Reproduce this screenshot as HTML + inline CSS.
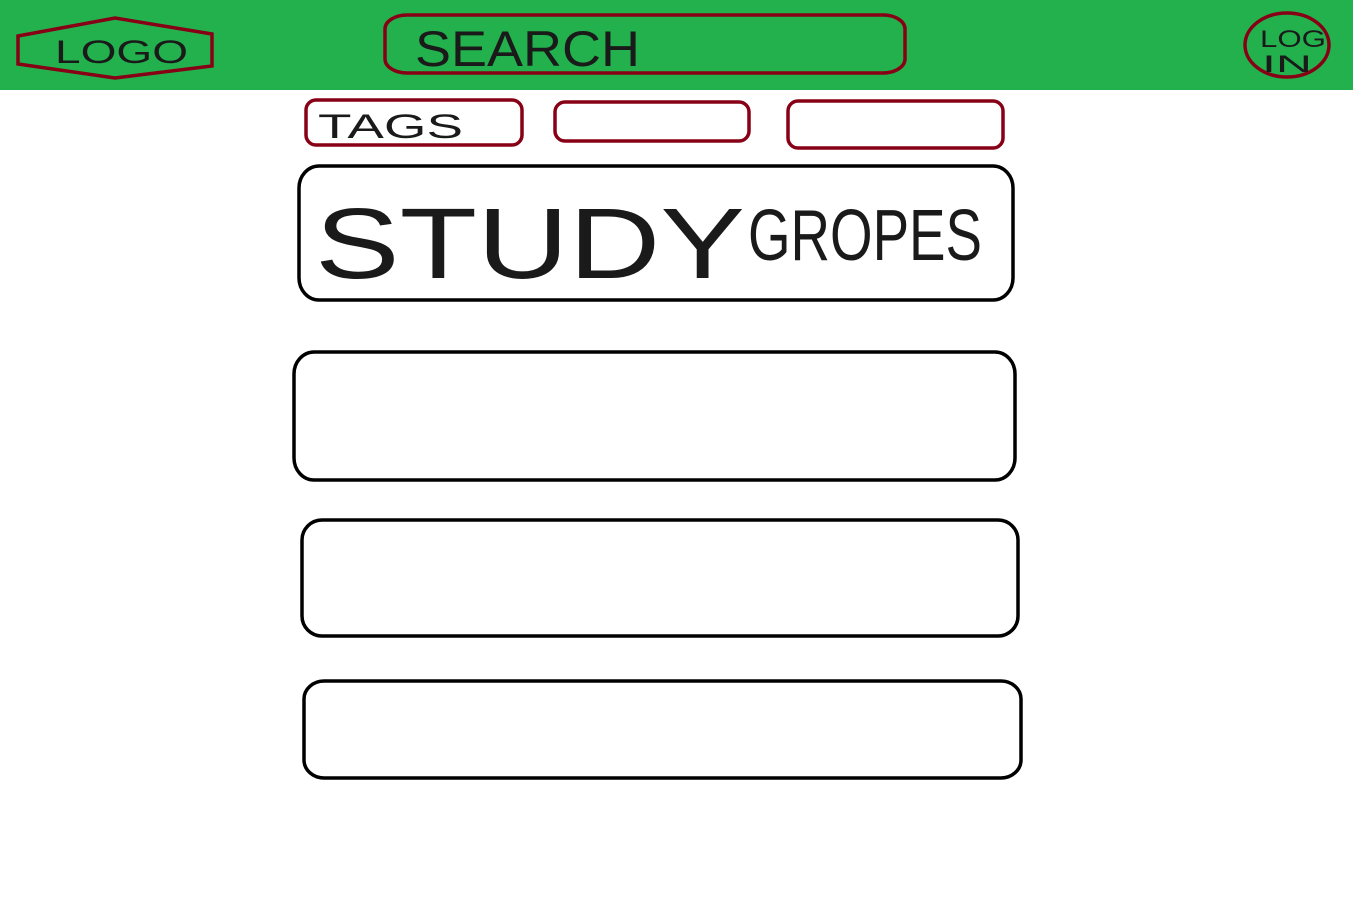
<!DOCTYPE html>
<html><head><meta charset="utf-8"><style>
html,body{margin:0;padding:0;background:#fff;width:1353px;height:902px;overflow:hidden}
svg text{font-family:"Liberation Sans",sans-serif;fill:#1a1a1a}
</style></head><body>
<svg width="1353" height="902" viewBox="0 0 1353 902" xmlns="http://www.w3.org/2000/svg">
<rect x="0" y="0" width="1353" height="90" fill="#22b14c"/>
<g fill="none" stroke="#880015" stroke-width="3.5">
<polygon points="18,36 115,18 212,34 212,66 115,78 18,64"/>
<rect x="385" y="15" width="520" height="58" rx="22" ry="14"/>
<ellipse cx="1287" cy="45" rx="42" ry="32"/>
<rect x="306" y="100" width="216" height="45" rx="10"/>
<rect x="555" y="102" width="194" height="39" rx="10"/>
<rect x="788" y="101" width="215" height="47" rx="10"/>
</g>
<g fill="none" stroke="#000" stroke-width="3.5">
<rect x="299" y="166" width="714" height="134" rx="20" ry="22"/>
<rect x="294" y="352" width="721" height="128" rx="20" ry="22"/>
<rect x="302" y="520" width="716" height="116" rx="20" ry="20"/>
<rect x="304" y="681" width="717" height="97" rx="20" ry="18"/>
</g>
<text x="55" y="63" font-size="32" textLength="133" lengthAdjust="spacingAndGlyphs">LOGO</text>
<text x="415" y="66" font-size="50" textLength="225" lengthAdjust="spacingAndGlyphs">SEARCH</text>
<text x="1260" y="47" font-size="24" textLength="66" lengthAdjust="spacingAndGlyphs">LOG</text>
<text x="1262" y="72" font-size="24" textLength="50" lengthAdjust="spacingAndGlyphs">IN</text>
<text x="318" y="138" font-size="34" textLength="145" lengthAdjust="spacingAndGlyphs">TAGS</text>
<text x="315" y="278" font-size="100" textLength="430" lengthAdjust="spacingAndGlyphs">STUDY</text>
<text x="748" y="260" font-size="72" textLength="234" lengthAdjust="spacingAndGlyphs">GROPES</text>
</svg>
</body></html>
